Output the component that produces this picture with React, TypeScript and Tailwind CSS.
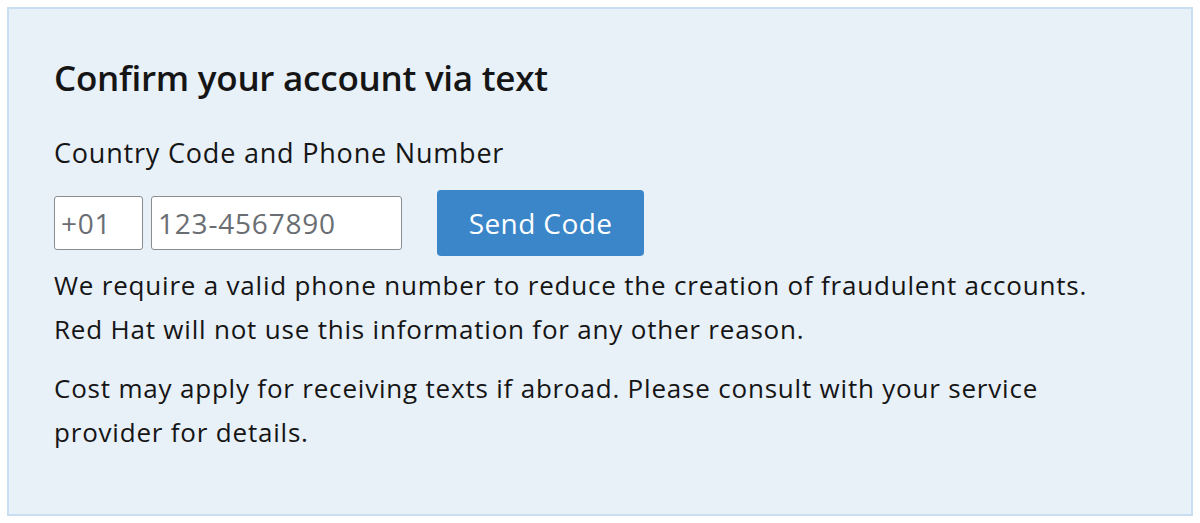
export default function App() {
  return (
    <div className="w-[1200px] h-[523px] bg-white p-[7px] font-['Open_Sans',sans-serif] text-[#151515]">
      <div className="h-full border-2 border-[#c8dff3] bg-[#e8f0f8] pl-[45px] pt-[45px]">
        <h2 className="text-[35px] leading-[48px] font-semibold tracking-[-0.25px]">Confirm your account via text</h2>
        <label htmlFor="phone" className="block mt-[33px] text-[27px] leading-[36px] tracking-[0.8px]">Country Code and Phone Number</label>
        <div className="flex items-center mt-[19px]">
          <input className="w-[89px] h-[54px] border border-[#8a8d90] rounded-[3px] bg-white px-[6px] text-[28px] tracking-[0.8px] placeholder:text-[#6a6e73]" placeholder="+01" />
          <input id="phone" className="ml-[8px] w-[251px] h-[54px] border border-[#8a8d90] rounded-[3px] bg-white px-[6px] text-[28px] tracking-[0.8px] placeholder:text-[#6a6e73]" placeholder="123-4567890" />
          <button type="button" className="ml-[35px] w-[207px] h-[66px] rounded-[4px] bg-[#3a86c8] text-white text-[28px] tracking-[0.4px]">Send Code</button>
        </div>
        <p className="mt-[7px] text-[26px] leading-[44px] tracking-[0.8px]">
          We require a valid phone number to reduce the creation of fraudulent accounts.<br />
          Red Hat will not use this information for any other reason.
        </p>
        <p className="mt-[15px] text-[26px] leading-[44px] tracking-[0.8px] w-[1020px]">
          Cost may apply for receiving texts if abroad. Please consult with your service provider for details.
        </p>
      </div>
    </div>
  );
}
